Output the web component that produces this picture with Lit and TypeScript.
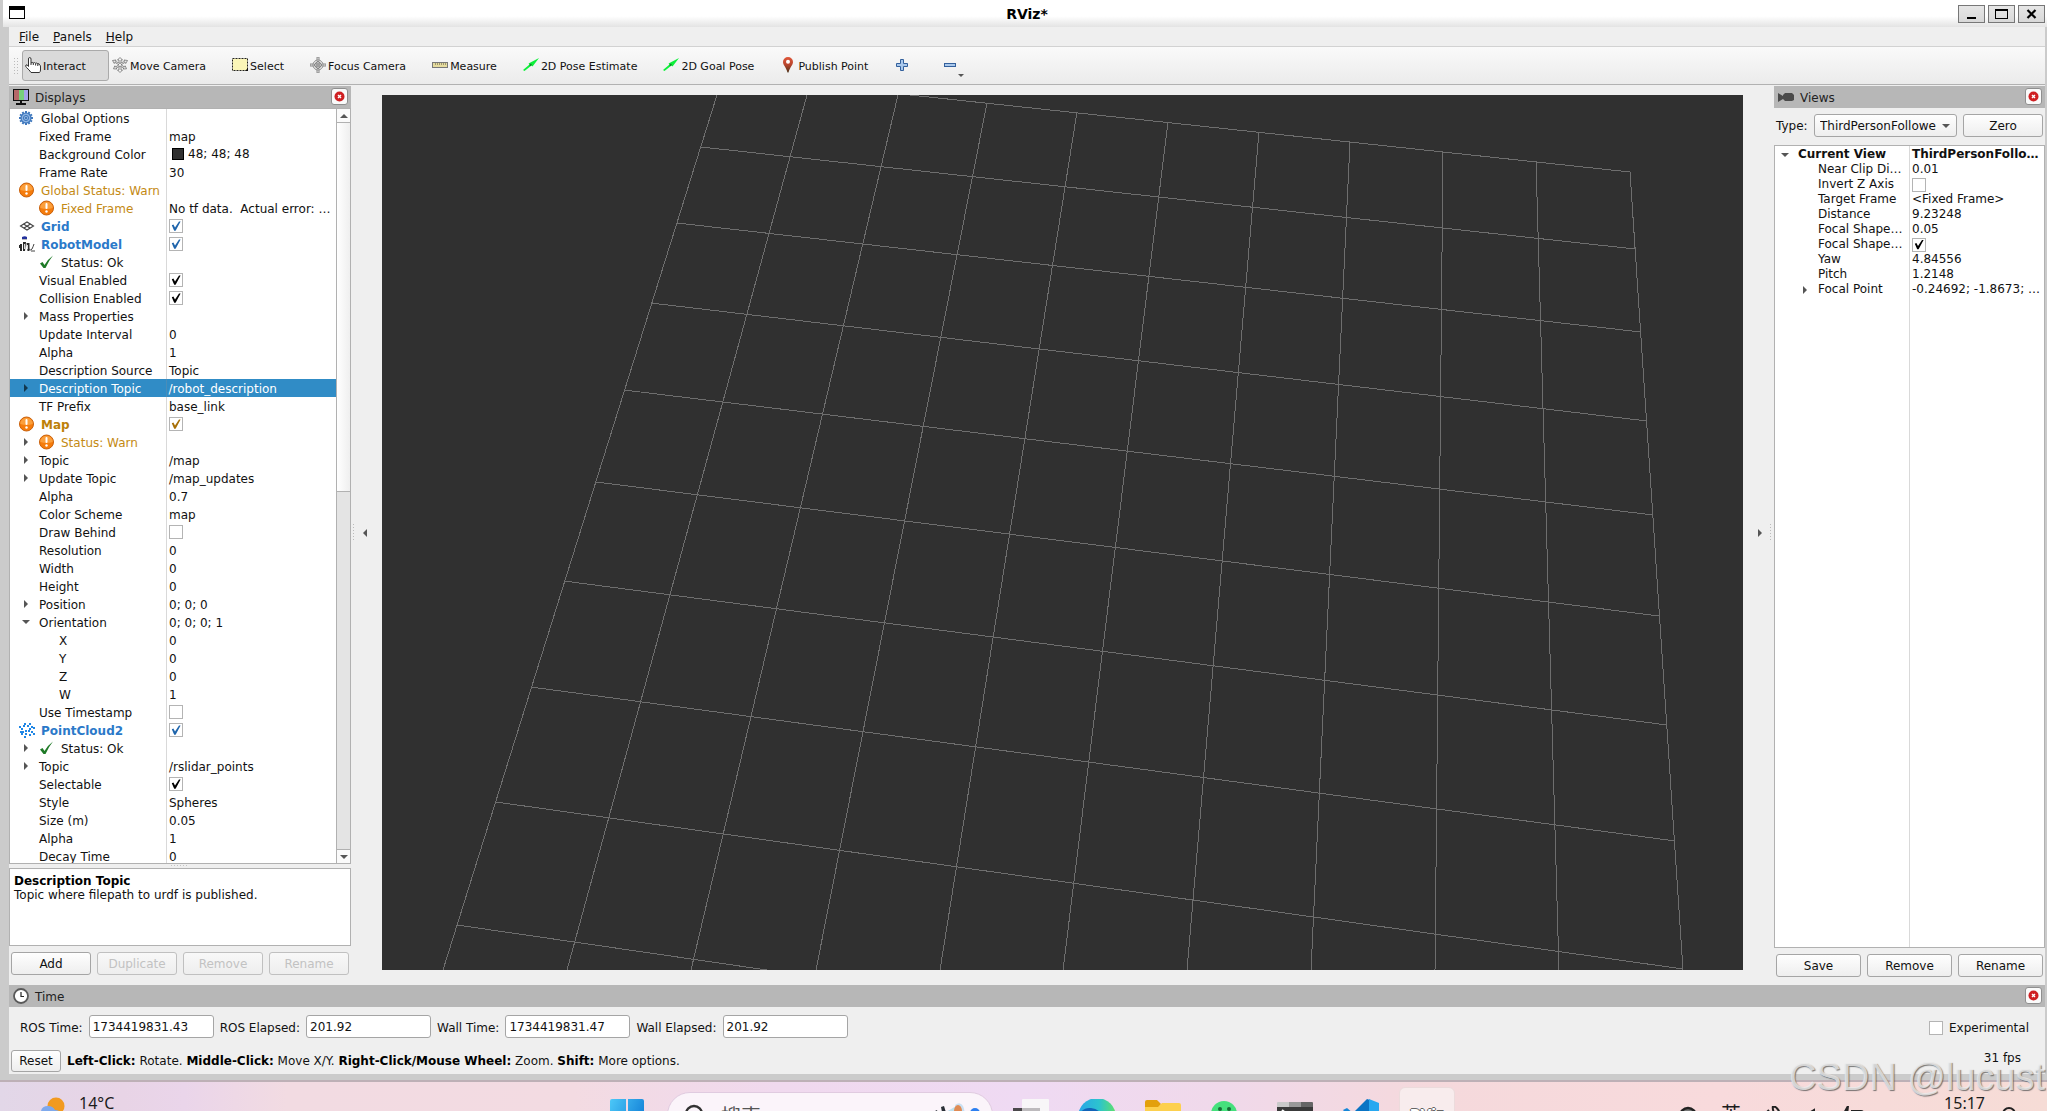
import { LitElement, html, svg, css, nothing, TemplateResult } from "lit";
import { customElement, property } from "lit/decorators.js";
import { classMap } from "lit/directives/class-map.js";

interface Row {
  name: string;
  level: 0 | 1 | 2;
  value?: string;
  check?: boolean;
  tone?: "warn" | "blue";
  bold?: boolean;
  boldValue?: boolean;
  icon?: string;
  arrow?: "closed" | "open";
  swatch?: boolean;
  selected?: boolean;
}

const gear = () => {
  const teeth = Array.from({ length: 12 }, (_, i) => i * 30);
  return svg`
    ${teeth.map((a) => svg`<rect x="6" y="1" width="2" height="3" fill="#3f78bd" transform="rotate(${a} 7 8)"/>`)}
    <circle cx="7" cy="8" r="5" fill="#8db4e2" stroke="#3f78bd" stroke-width="1.2"/>
    <circle cx="7" cy="8" r="2.6" fill="none" stroke="#3f78bd"/>
    <circle cx="7" cy="8" r="1" fill="#2f68ad"/>`;
};

const cloud: number[][] = [
  [5, 1], [10, 1], [0, 4], [4, 3], [8, 3], [12, 4], [2, 6], [6, 8], [9, 8], [10, 6],
  [3, 9], [1, 9], [14, 5], [12, 9], [6, 11], [10, 12], [14, 11], [5, 14], [2, 11],
];

const icons: Record<string, () => TemplateResult | unknown> = {
  gear,
  warn: () => svg`
    <circle cx="7.500" cy="8" r="7" fill="#f57c0c" stroke="#c9600a"/>
    <path d="M1.300 8a6.200 6.200 0 0 1 12.400 0q-6 2-12.400 0z" fill="#fb9f3c"/>
    <rect x="6.500" y="3" width="2" height="6" rx="1" fill="#fff"/>
    <circle cx="7.500" cy="11.500" r="1.200" fill="#fff"/>`,
  ok: () => svg`<path d="M1 9.500l2.500-1.500 2 3Q9 5 14 1.500 9.500 7 6.500 14H4.500z" fill="#1e7a26"/>`,
  grid: () => svg`
    <g fill="none" stroke="#444" stroke-width="1.100">
      <path d="M1.500 8L8 4l6.500 4L8 12z"/>
      <path d="M4.500 6l6.500 4M11.500 6L5 10"/>
    </g>`,
  robot: () => svg`
    <path d="M3 1q3-1.500 5 0v2H3z" fill="#23319c"/>
    <path d="M3 3h5v1H3z" fill="#b9b9b9"/>
    <path d="M1 8h2v7H1zM4 6h3l-1 9H4zM7.500 7h3v8h-2zM0 9h1v3H0z" fill="#2a2a2a"/>
    <path d="M5 8h1v5H5zM8 9h1v4H8z" fill="#d8d8d8"/>
    <path d="M10 13q2 2 3 0t2-5M12 15h4" fill="none" stroke="#444"/>`,
  points: () => svg`<g fill="#1f86e5">${cloud.map(
    ([x, y]) => svg`<rect x="${x}" y="${y}" width="2" height="2"/>`,
  )}</g>`,
  displays: () => svg`
    <rect x="0" y="0" width="16" height="12" fill="#111"/>
    <rect x="1" y="1" width="5" height="10" fill="#b56868"/>
    <rect x="6" y="1" width="5" height="10" fill="#77cf7c"/>
    <rect x="11" y="1" width="4" height="10" fill="#a5a2ea"/>
    <path d="M7 12h2v2h4v2H3v-2h4z" fill="#111"/>`,
  views: () => svg`
    <path d="M0 4l5 3V6l2-2h7l2 2v5l-2 1H7L5 10l-5 3z" fill="#4a4a4a"/>`,
  clock: () => svg`
    <circle cx="8" cy="8" r="7" fill="#fff" stroke="#595959" stroke-width="1.800"/>
    <path d="M8 4v4.500h3" fill="none" stroke="#222" stroke-width="1.200"/>`,
  window: () => svg`
    <rect x="0.500" y="1.500" width="15" height="12" fill="#fff" stroke="#000"/>
    <rect x="0" y="1" width="16" height="4" fill="#000"/>`,
  hand: () => svg`
    <path d="M3.500 9.500V2q0-1.500 1.200-1.500T6 2v4q1.300-1.200 2.300 0 1.300-1 2.300.3 1.300-.8 2.200.4 1.700-.4 1.700 1.300 1.300 0 1 2V13q0 1.500-1 2.500H6Q4.500 13 1.500 10.500 0 9 1 8t2.500 1.500zM6 6v2M8.300 6v2M10.600 6.500v2M12.800 7v2" fill="#fff" stroke="#333"/>`,
  move: () => svg`
    <g fill="#f5f5f5" stroke="#6f6f6f" stroke-width="0.800">
      <path d="M8 0.500l2.500 2.500H9v10h1.500L8 15.500 5.500 13H7V3H5.500z"/>
      <path d="M0.500 3.500L4 3l-.6 1.300L8 6.500l4.600-2.200L12 3l3.500.5-1.800 3-.5-1.200L9 7.800l3.500 2.200.6-1.200 1.400 3-3.300.2.600-1L8 9l-3.800 2 .6 1-3.300-.2 1.400-3 .6 1.200L7 7.800 2.800 5.300l-.5 1.200z"/>
    </g>`,
  select: () => svg`
    <rect x="0.500" y="1.500" width="15" height="12" fill="#fbf6b8" stroke="#222" stroke-dasharray="2 1"/>
    <path d="M13 14l3-3v3z" fill="#111"/>`,
  focus: () => svg`
    <g fill="#ececec" stroke="#808080" stroke-width="0.900">
      <path d="M7 0h2v4H7zM7 12h2v4H7zM0 7h4v2H0zM12 7h4v2h-4z"/>
      <circle cx="8" cy="8" r="5"/><circle cx="8" cy="8" r="3"/>
      <path d="M7 4.500h2v7H7zM4.500 7h7v2h-7z"/>
    </g>`,
  measure: () => svg`
    <rect x="0.500" y="5.500" width="15" height="5" fill="#e6dc9e" stroke="#777"/>
    <path d="M3.500 6v2M5.500 6v2M7.500 6v2M9.500 6v2M11.500 6v2M13.500 6v2" stroke="#8a8462" stroke-width="0.800"/>`,
  pose: () => svg`
    <path d="M0 13L6.500 7.500 5.500 6.500 16 1 9.500 9.500l-1-1L1.500 14z" fill="#0df03a"/>
    <path d="M6 8l2-1.500L9 8 7.500 9z" fill="#0a8a22"/>`,
  pin: () => svg`
    <defs><linearGradient id="p" x1="0" y1="0" x2="0" y2="1"><stop offset="0" stop-color="#e0573a"/><stop offset="0.500" stop-color="#b8452d"/><stop offset="1" stop-color="#4b3218"/></linearGradient></defs>
    <path d="M8 0a5 5 0 0 1 5 5c0 3-3 5-4.500 10.500h-1C6 10 3 8 3 5a5 5 0 0 1 5-5z" fill="url(#p)"/>
    <circle cx="8" cy="4.700" r="2" fill="#fff"/>`,
  plus: () => svg`<path d="M6.500 2.500h3v4h4v3h-4v4h-3v-4h-4v-3h4z" fill="#a9c8ec" stroke="#33609c"/>`,
  minus: () => svg`<rect x="2.500" y="6.500" width="11" height="3" fill="#a9c8ec" stroke="#33609c"/>`,
};

const icon = (name: string, size = 16) =>
  html`<svg class="icon" width=${size} height=${size} viewBox="0 0 16 16" aria-hidden="true">${icons[name]()}</svg>`;

const base = css`
  * { box-sizing: border-box; }
  button, input, select { font: inherit; color: inherit; margin: 0; }
  .icon { display: block; flex: none; }
  .btn {
    height: 23px; padding: 0; border: 1px solid #a5a5a5; border-radius: 3px;
    background: linear-gradient(#fefefe, #eeeeee); line-height: 20px; text-align: center;
  }
  .btn:disabled { color: #c2c2c2; border-color: #c0c0c0; background: linear-gradient(#f8f8f8, #eeeeee); }
  .check {
    appearance: none; display: grid; place-items: center; flex: none; width: 14px; height: 14px;
    background: #fff; border: 1px solid #b4b4b4; color: #000;
  }
  .check:checked::after {
    content: ""; width: 10px; height: 10px; background: currentColor;
    clip-path: polygon(8% 42%, 24% 36%, 40% 66%, 80% 4%, 96% 4%, 46% 98%, 32% 98%);
  }
`;

const displayRows: Row[] = [
  { name: "Global Options", level: 0, icon: "gear" },
  { name: "Fixed Frame", level: 1, value: "map" },
  { name: "Background Color", level: 1, value: "48; 48; 48", swatch: true },
  { name: "Frame Rate", level: 1, value: "30" },
  { name: "Global Status: Warn", level: 0, icon: "warn", tone: "warn" },
  { name: "Fixed Frame", level: 1, icon: "warn", tone: "warn", value: "No tf data.\u00a0 Actual error: …" },
  { name: "Grid", level: 0, icon: "grid", tone: "blue", bold: true, check: true },
  { name: "RobotModel", level: 0, icon: "robot", tone: "blue", bold: true, check: true },
  { name: "Status: Ok", level: 1, icon: "ok" },
  { name: "Visual Enabled", level: 1, check: true },
  { name: "Collision Enabled", level: 1, check: true },
  { name: "Mass Properties", level: 1, arrow: "closed" },
  { name: "Update Interval", level: 1, value: "0" },
  { name: "Alpha", level: 1, value: "1" },
  { name: "Description Source", level: 1, value: "Topic" },
  { name: "Description Topic", level: 1, value: "/robot_description", arrow: "closed", selected: true },
  { name: "TF Prefix", level: 1, value: "base_link" },
  { name: "Map", level: 0, icon: "warn", tone: "warn", bold: true, check: true },
  { name: "Status: Warn", level: 1, icon: "warn", tone: "warn", arrow: "closed" },
  { name: "Topic", level: 1, value: "/map", arrow: "closed" },
  { name: "Update Topic", level: 1, value: "/map_updates", arrow: "closed" },
  { name: "Alpha", level: 1, value: "0.7" },
  { name: "Color Scheme", level: 1, value: "map" },
  { name: "Draw Behind", level: 1, check: false },
  { name: "Resolution", level: 1, value: "0" },
  { name: "Width", level: 1, value: "0" },
  { name: "Height", level: 1, value: "0" },
  { name: "Position", level: 1, value: "0; 0; 0", arrow: "closed" },
  { name: "Orientation", level: 1, value: "0; 0; 0; 1", arrow: "open" },
  { name: "X", level: 2, value: "0" },
  { name: "Y", level: 2, value: "0" },
  { name: "Z", level: 2, value: "0" },
  { name: "W", level: 2, value: "1" },
  { name: "Use Timestamp", level: 1, check: false },
  { name: "PointCloud2", level: 0, icon: "points", tone: "blue", bold: true, check: true },
  { name: "Status: Ok", level: 1, icon: "ok", arrow: "closed" },
  { name: "Topic", level: 1, value: "/rslidar_points", arrow: "closed" },
  { name: "Selectable", level: 1, check: true },
  { name: "Style", level: 1, value: "Spheres" },
  { name: "Size (m)", level: 1, value: "0.05" },
  { name: "Alpha", level: 1, value: "1" },
  { name: "Decay Time", level: 1, value: "0" },
];

const viewRows: Row[] = [
  { name: "Current View", level: 1, value: "ThirdPersonFollo…", bold: true, boldValue: true, arrow: "open" },
  { name: "Near Clip Di…", level: 2, value: "0.01" },
  { name: "Invert Z Axis", level: 2, check: false },
  { name: "Target Frame", level: 2, value: "<Fixed Frame>" },
  { name: "Distance", level: 2, value: "9.23248" },
  { name: "Focal Shape…", level: 2, value: "0.05" },
  { name: "Focal Shape…", level: 2, check: true },
  { name: "Yaw", level: 2, value: "4.84556" },
  { name: "Pitch", level: 2, value: "1.2148" },
  { name: "Focal Point", level: 2, value: "-0.24692; -1.8673; …", arrow: "closed" },
];

@customElement("property-tree")
class PropertyTree extends LitElement {
  @property({ attribute: false }) rows: Row[] = [];
  @property() label = "";
  @property({ type: Boolean, reflect: true }) compact = false;

  static styles = [base, css`
    :host {
      display: block; flex: 1; min-width: 0; height: 100%; overflow: hidden;
      background: linear-gradient(#d9d9d9, #d9d9d9) 156px 0 / 1px 100% no-repeat #fff;
    }
    :host([compact]) { background-position: 134px 0; padding-top: 1px; }
    table { width: 100%; border-collapse: collapse; table-layout: fixed; }
    .names { width: 156px; }
    :host([compact]) .names { width: 134px; }
    td { padding: 0; height: 18px; overflow: hidden; }
    :host([compact]) td { height: 15px; }
    .cell { display: flex; align-items: center; height: 18px; line-height: 16px; white-space: pre; }
    .text { padding-top: 2px; }
    :host([compact]) .cell { height: 15px; line-height: 15px; }
    :host([compact]) .text, .swatch + .text { padding-top: 0; }
    .lv0, .lv1 { padding-left: 9px; }
    .lv2 { padding-left: 29px; }
    :host([compact]) .lv1 { padding-left: 3px; }
    :host([compact]) .lv2 { padding-left: 23px; }
    .slot { width: 14px; height: 12px; margin-right: 6px; flex: none; fill: #555; }
    .icon { margin-right: 6px; }
    .value { padding-left: 3px; }
    .bold { font-weight: bold; }
    .warn { color: #c48a14; }
    .blue { color: #2b79c9; }
    .bold.warn { color: #bd8008; }
    .check.warn { color: #a86f06; }
    .check.blue { color: #1f65ac; }
    .selected td { background: #308cc6; color: #fff; }
    .selected .slot { fill: #12384f; }
    .selected td + td { border-left: 1px solid #4a8db8; }
    .selected td + td .value { padding-left: 2px; }
    .swatch { width: 12px; height: 12px; margin: 0 4px 0 3px; background: #303030; border: 1px solid #000; }
  `];

  private arrow(row: Row) {
    if (row.level === 0) return nothing;
    const d = row.arrow === "open" ? "M3 4h8L7 8z" : row.arrow === "closed" ? "M5 2l4 4-4 4z" : "";
    return html`<svg class="slot" viewBox="0 0 14 12" aria-hidden="true"><path d=${d} /></svg>`;
  }

  render() {
    return html`
      <table aria-label=${this.label}>
        <colgroup><col class="names" /><col /></colgroup>
        <tbody>
          ${this.rows.map((row) => html`
            <tr class=${classMap({ selected: !!row.selected })}>
              <td>
                <div class=${classMap({ cell: true, [`lv${row.level}`]: true, bold: !!row.bold, [row.tone ?? "plain"]: true })}>
                  ${this.arrow(row)}${row.icon ? icon(row.icon) : nothing}<span class="text">${row.name}</span>
                </div>
              </td>
              <td>
                <div class=${classMap({ cell: true, value: true, bold: !!row.boldValue })}>
                  ${row.check !== undefined
                    ? html`<input type="checkbox" class="check ${row.tone ?? ""}" aria-label=${row.name} .checked=${row.check} />`
                    : nothing}${row.swatch ? html`<span class="swatch"></span>` : nothing}<span class="text">${row.value ?? ""}</span>
                </div>
              </td>
            </tr>`)}
        </tbody>
      </table>`;
  }
}

@customElement("dock-title")
class DockTitle extends LitElement {
  @property() icon = "";
  @property() label = "";

  static styles = [base, css`
    :host {
      display: flex; flex: none; align-items: center; gap: 6px; height: 22px; padding: 0 3px 0 4px;
      background: #b7b7b7; color: #222;
    }
    .text { flex: 1; font: inherit; line-height: 20px; margin: 0; padding-top: 2px; }
    .close {
      display: grid; place-items: center; width: 17px; height: 17px; padding: 0; margin-bottom: 2px;
      border: 1px solid #8f8f8f; border-radius: 3px; background: #fafafa;
    }
  `];

  render() {
    return html`
      ${icon(this.icon)}
      <h2 class="text">${this.label}</h2>
      <button class="close" aria-label="Close ${this.label}">
        <svg class="icon" width="11" height="11" viewBox="0 0 11 11" aria-hidden="true">
          <circle cx="5.500" cy="5.500" r="5" fill="#cf1f22" />
          <path d="M4 4l3 3M7 4L4 7" stroke="#fff" stroke-width="1.400" />
        </svg>
      </button>`;
  }
}

const gridLines: number[][] = [
  [882, 92, 1630, 172], [701, 147, 1635, 249], [677, 223, 1641, 332], [651, 303, 1647, 421],
  [624, 390, 1653, 515], [596, 482, 1659, 616], [564, 581, 1667, 725], [531, 687, 1675, 841],
  [496, 802, 1683, 969], [457, 925, 767, 970],
  [717, 95, 443, 970], [807, 95, 567, 970], [898, 95, 691, 970], [987, 103, 816, 970],
  [1077, 112, 940, 970], [1168, 122, 1063, 970], [1259, 132, 1187, 970], [1350, 142, 1311, 970],
  [1443, 152, 1435, 970], [1536, 161, 1559, 970], [1630, 172, 1683, 970],
];

@customElement("scene-view")
class SceneView extends LitElement {
  static styles = css`
    :host { display: block; flex: 1; min-width: 0; margin: 9px 0 15px; background: #303030; overflow: hidden; }
    svg { display: block; width: 100%; height: 100%; }
    line { stroke: #6e6e6e; stroke-width: 1; shape-rendering: crispEdges; }
  `;

  render() {
    return html`
      <svg viewBox="382 95 1361 875" preserveAspectRatio="xMidYMid slice" role="img" aria-label="Grid">
        ${gridLines.map(([a, b, c, d]) => svg`<line x1=${a} y1=${b} x2=${c} y2=${d} />`)}
      </svg>`;
  }
}

@customElement("task-bar")
class TaskBar extends LitElement {
  static styles = [base, css`
    :host {
      display: grid; grid-template-columns: minmax(0, 1fr) auto minmax(0, 1fr); align-items: start;
      flex: none; height: 29px; overflow: hidden; padding-left: 7px;
      color: #1c1c1c; font: 16px "Noto Sans", "Noto Sans CJK SC", sans-serif;
      background: linear-gradient(90deg, #e2d7e8 0, #e8d4e6 6%, #ead5ea 9%, #f2dbe2 14%, #f3dbe2 28%, #f0d9ee 38%, #efdaf3 50%, #f0d9ea 60%, #f5d9dc 70%, #f8dadc 84%, #f6dcd6 100%);
    }
    .side { display: flex; align-items: flex-start; }
    .weather { gap: 14px; padding-left: 34px; }
    .weather svg { margin-top: 15px; }
    .weather span, .clock { line-height: 22px; margin-top: 10px; }
    .tray { justify-content: flex-end; gap: 16px; padding-right: 30px; }
    .tray svg { margin-top: 24px; flex: none; }
    .icons { display: flex; gap: 23px; align-items: flex-start; margin-right: 62px; }
    .ime { font-size: 20px; line-height: 24px; margin-top: 21px; }
    .apps { display: flex; align-items: flex-start; }
    .app {
      display: flex; flex: none; justify-content: center; width: 66px; height: 48px; padding: 17px 0 0;
      border: 0; background: none;
    }
    .tile {
      display: block; width: 56px; height: 48px; margin-top: -12px; border: 1px solid #ecdbdc; border-radius: 6px;
      background: #f8eced; color: #fff; font: bold 14px/20px "DejaVu Sans", sans-serif; padding-top: 16px;
      text-shadow: 1px 0 #666, -1px 0 #666, 0 1px #666, 0 -1px #666;
    }
    .search {
      display: flex; flex: none; gap: 18px; width: 326px; height: 46px; margin: 10px 5px 0 7px; padding: 10px 12px 0 17px;
      border: 1px solid #e0cbe0; border-radius: 23px; background: #fbf4fa; align-items: flex-start;
    }
    .search input {
      flex: 1; min-width: 0; height: 28px; padding: 0; border: 0; background: none; outline: none;
      font-size: 20px; line-height: 28px;
    }
    .search input::placeholder { color: #555; opacity: 1; }
  `];

  render() {
    return html`
      <div class="side weather">
        <svg width="24" height="22" viewBox="0 0 24 22" aria-hidden="true">
          <circle cx="15" cy="9" r="8.500" fill="#f29a1f" />
          <path d="M0 14q1-5 7-5 5 0 7 4 6 0 7 6v3H0z" fill="#7fa9ec" />
        </svg>
        <span>14°C</span>
      </div>
      <div class="apps">
        <button class="app" aria-label="Start">
          <svg width="34" height="34" viewBox="0 0 34 34" aria-hidden="true">
            <defs><linearGradient id="w" x1="0" x2="1" y2="0.500"><stop offset="0" stop-color="#4cc8f8" /><stop offset="1" stop-color="#1482d8" /></linearGradient></defs>
            <path d="M0 2q0-2 2-2h14v16H0zM18 0h14q2 0 2 2v14H18zM0 18h16v16H0zM18 18h16v16H18z" fill="url(#w)" />
          </svg>
        </button>
        <div class="search">
          <svg width="18" height="22" viewBox="0 0 18 22" aria-hidden="true"><circle cx="9" cy="11" r="8" fill="none" stroke="#333" stroke-width="2.400" /></svg>
          <input type="text" placeholder="搜索" aria-label="搜索" />
          <svg width="52" height="24" viewBox="0 0 52 24" aria-hidden="true">
            <path d="M5 9l4-2 3 12H8zM13 4l3-1 5 16h-5z" fill="#2a2f36" />
            <path d="M18 9l12-7 3 15H18z" fill="#bfe0ee" />
            <path d="M27 2q5-4 8 1 3 6 0 14h-6z" fill="#c9dff2" />
            <ellipse cx="30" cy="8" rx="4" ry="6" fill="#e08a54" />
            <circle cx="47" cy="10" r="5" fill="#2d7ff0" />
          </svg>
        </div>
        <button class="app" aria-label="Task view">
          <svg width="36" height="30" viewBox="0 0 36 30" aria-hidden="true">
            <rect x="9" y="0" width="27" height="24" rx="1" fill="#f8f6f8" />
            <rect x="0" y="9" width="27" height="20" fill="#4a484a" /><rect x="9" y="9" width="18" height="15" fill="#bdbabd" />
          </svg>
        </button>
        <button class="app" aria-label="Edge">
          <svg width="38" height="36" viewBox="0 0 38 36" aria-hidden="true">
            <defs><linearGradient id="e" x1="0" x2="1"><stop offset="0" stop-color="#2aa5e8" /><stop offset="0.550" stop-color="#2cc3cf" /><stop offset="1" stop-color="#5fe06a" /></linearGradient></defs>
            <circle cx="19" cy="18" r="19" fill="url(#e)" />
            <path d="M0 18q4-10 13-9t12 9z" fill="#1263b8" />
          </svg>
        </button>
        <button class="app" aria-label="Explorer">
          <svg width="36" height="30" viewBox="0 0 36 30" aria-hidden="true">
            <path d="M0 3q0-2 2-2h10l4 4-3 4H0z" fill="#e3a00c" />
            <path d="M0 8h13l4-4h17q2 0 2 2v24H0z" fill="#fdd04e" />
          </svg>
        </button>
        <button class="app" aria-label="Chat">
          <svg width="36" height="30" viewBox="0 0 36 30" aria-hidden="true">
            <circle cx="13" cy="15" r="13" fill="#45e07c" />
            <circle cx="9" cy="10" r="2" fill="#176b36" /><circle cx="18" cy="10" r="2" fill="#176b36" />
          </svg>
        </button>
        <button class="app" aria-label="Terminal">
          <svg width="36" height="30" viewBox="0 0 36 30" aria-hidden="true">
            <path d="M0 4q0-1 1-1h11v5H0z" fill="#c9c9c9" /><path d="M12 3h12v5H12z" fill="#999" />
            <path d="M24 3h11q1 0 1 1v4H24z" fill="#666" /><path d="M0 8h36v22H0z" fill="#3a3a3a" />
            <path d="M5 11l5 4" stroke="#fff" stroke-width="2" />
          </svg>
        </button>
        <button class="app" aria-label="Code">
          <svg width="36" height="34" viewBox="0 0 36 34" aria-hidden="true">
            <path d="M24 0l3 1v12L6 30 0 24z" fill="#0a74c4" />
            <path d="M26 0l10 4v30l-10-4z" fill="#28a8f0" />
            <path d="M0 11l4-2 14 12-6 4z" fill="#1587d8" />
          </svg>
        </button>
        <button class="app"><span class="tile">RViz</span></button>
      </div>
      <div class="side tray">
        <div class="icons">
          <svg width="20" height="12" viewBox="0 0 20 12" aria-hidden="true"><circle cx="10" cy="10" r="8" fill="#777" stroke="#222" stroke-width="2.400" /></svg>
          <span class="ime">英</span>
          <svg width="18" height="12" viewBox="0 0 18 12" aria-hidden="true"><path d="M1 8l4-4M9 0q5 1 7 8M9 0q-1 3 2 9" fill="none" stroke="#222" stroke-width="2" /></svg>
          <svg width="14" height="12" viewBox="0 0 14 12" aria-hidden="true"><path d="M1 9l8-5v8" fill="none" stroke="#222" stroke-width="2" /></svg>
          <svg width="24" height="12" viewBox="0 0 24 12" aria-hidden="true"><path d="M6 0L1 9h4zM9 5h10q3 0 3 5" fill="none" stroke="#222" stroke-width="2" /></svg>
        </div>
        <span class="clock">15:17</span>
        <svg width="16" height="12" viewBox="0 0 16 12" aria-hidden="true"><circle cx="8" cy="8" r="6" fill="none" stroke="#222" stroke-width="2" /></svg>
      </div>`;
  }
}

@customElement("app-root")
class AppRoot extends LitElement {
  static styles = [base, css`
    :host {
      display: flex; flex-direction: column; height: 100vh; overflow: hidden; position: relative;
      background: #cbcbcb; color: #111; font: 12px "DejaVu Sans", sans-serif;
    }
    .titlebar {
      display: grid; grid-template-columns: 1fr auto 1fr; flex: none; align-items: start; height: 27px;
      margin-left: 3px; padding: 5px 2px 0 6px; background: linear-gradient(#fff 60%, #e3e3e3);
    }
    .title { margin: 0; font-size: 14px; line-height: 18px; color: #000; }
    .wbtns { display: flex; gap: 3px; justify-content: flex-end; }
    .wbtn {
      display: grid; place-items: center; width: 27px; height: 18px; padding: 0; border: 1px solid #777;
      background: linear-gradient(#e6e6e6, #d8d8d8);
    }
    .frame { display: flex; flex: 1; flex-direction: column; min-height: 0; margin: 0 2px 6px 9px; background: #efefef; }
    .menu { display: flex; flex: none; height: 20px; gap: 14px; padding: 1px 0 0 10px; border-bottom: 1px solid #d2d2d2; }
    .menu button { padding: 0; border: 0; background: none; line-height: 18px; }
    .tools {
      display: flex; flex: none; align-items: center; height: 38px; padding-left: 4px; font-size: 11px;
      border-bottom: 1px solid #b1b1b1; background: linear-gradient(#fafafa, #ebebeb);
    }
    .grip { width: 5px; height: 17px; margin-right: 4px; background: radial-gradient(circle, #bbb 1px, transparent 1px) 0 0 / 3px 3px; }
    .tool {
      display: flex; align-items: center; gap: 2px; height: 31px; padding: 0 22px 0 2px;
      border: 1px solid transparent; border-radius: 3px; background: none;
    }
    .tool .icon { margin-bottom: 2px; }
    .tool .text { padding-top: 2px; }
    .tool.active { border-color: #aaa; background: #dadada; }
    .tool.drop { gap: 0; }
    .caret { display: block; align-self: flex-end; margin-bottom: 3px; }
    .caret svg { display: block; }
    .main { display: flex; flex: 1; min-height: 0; padding-top: 1px; }
    .dock { display: flex; flex: none; flex-direction: column; }
    .left { width: 342px; }
    .right { width: 271px; }
    .box { display: flex; flex: 1; min-height: 0; border: 1px solid #b1b1b1; background: #fff; }
    .scroll { display: flex; flex: none; flex-direction: column; width: 14px; border-left: 1px solid #b1b1b1; background: #e4e4e4; }
    .scroll button { display: grid; place-items: center; flex: none; height: 14px; padding: 0; border: 0; background: #fafafa; }
    .scroll .up { border-bottom: 1px solid #b1b1b1; }
    .scroll .down { border-top: 1px solid #b1b1b1; margin-top: auto; }
    .thumb { height: 49%; border-bottom: 1px solid #b1b1b1; background: linear-gradient(90deg, #fff, #efefef); }
    .hsplit { display: grid; place-items: center; flex: none; height: 4px; }
    .hdots { width: 18px; height: 2px; background: linear-gradient(90deg, #c4c4c4 1px, transparent 1px) 0 0 / 3px 1px repeat-x; }
    .help { flex: none; height: 78px; padding: 5px 4px; border: 1px solid #b1b1b1; background: #fff; line-height: 14px; }
    .help strong, .hints b { color: #000; }
    .help p { margin: 0; }
    .row { display: flex; flex: none; gap: 6px; padding: 6px 2px 10px; }
    .row.tight { padding-bottom: 8px; }
    .row .btn { flex: 1; }
    .vsplit { display: flex; flex: none; align-items: center; width: 31px; padding-bottom: 6px; gap: 6px; }
    .vsplit.end { justify-content: flex-end; }
    .vsplit button { padding: 0; border: 0; background: none; }
    .vdots { width: 2px; height: 18px; margin: 0 2px; background: linear-gradient(#bbb 1px, transparent 1px) 0 0 / 1px 3px repeat-y; }
    .typerow { display: flex; flex: none; align-items: center; gap: 6px; padding: 6px 2px 8px; }
    .typerow label { flex: none; width: 32px; }
    .combo { display: flex; flex: 1; min-width: 0; align-items: center; position: relative; }
    .combo select {
      appearance: none; width: 100%; height: 23px; padding: 0 20px 0 5px; border: 1px solid #a5a5a5; border-radius: 3px;
      background: linear-gradient(#fefefe, #eeeeee); overflow: hidden;
    }
    .combo svg { position: absolute; right: 7px; pointer-events: none; }
    .zero { width: 80px; }
    .times { display: flex; flex: none; align-items: center; gap: 6px; padding: 8px 16px 12px 11px; }
    .times label { padding-top: 2px; }
    .times input[type="text"] { width: 125px; height: 23px; padding: 0 3px; border: 1px solid #a5a5a5; border-radius: 3px; background: #fff; }
    .spacer { flex: 1; }
    .exp { display: flex; align-items: center; gap: 6px; }
    .status { display: flex; flex: none; align-items: center; gap: 6px; padding: 0 24px 2px 2px; }
    .reset { width: 50px; height: 22px; }
    .hints { flex: 1; }
    .fps { padding-bottom: 7px; }
    .edge { flex: none; height: 2px; background: #bdb0b6; }
    .mark {
      position: absolute; right: 2px; bottom: 12px; margin: 0; font: 38px/44px "Liberation Sans", sans-serif;
      color: rgba(238, 238, 238, 0.8); text-shadow: 1px 1px 1px rgba(90, 90, 90, 0.8); pointer-events: none;
    }
  `];

  private tools: [string, string][] = [
    ["hand", "Interact"], ["move", "Move Camera"], ["select", "Select"], ["focus", "Focus Camera"],
    ["measure", "Measure"], ["pose", "2D Pose Estimate"], ["pose", "2D Goal Pose"], ["pin", "Publish Point"],
  ];

  private clocks: [string, string, string][] = [
    ["rt", "ROS Time:", "1734419831.43"], ["re", "ROS Elapsed:", "201.92"],
    ["wt", "Wall Time:", "1734419831.47"], ["we", "Wall Elapsed:", "201.92"],
  ];

  private tri(d: string, w = 8, h = 8) {
    return html`<svg width=${w} height=${h} viewBox="0 0 ${w} ${h}" aria-hidden="true"><path d=${d} fill="#555" /></svg>`;
  }

  render() {
    return html`
      <header class="titlebar">
        ${icon("window")}
        <h1 class="title">RViz*</h1>
        <div class="wbtns">
          <button class="wbtn" aria-label="Minimize"><svg width="13" height="12" viewBox="0 0 13 12"><path d="M2 9h9v2H2z" /></svg></button>
          <button class="wbtn" aria-label="Maximize"><svg width="13" height="12" viewBox="0 0 13 12"><path d="M0 1h13v10H0zM1 3v7h11V3z" fill-rule="evenodd" /></svg></button>
          <button class="wbtn" aria-label="Close"><svg width="13" height="12" viewBox="0 0 13 12"><path d="M2.500 2l8 8M10.500 2l-8 8" stroke="#000" stroke-width="2.200" /></svg></button>
        </div>
      </header>
      <div class="frame">
        <nav class="menu">
          <button><u>F</u>ile</button><button><u>P</u>anels</button><button><u>H</u>elp</button>
        </nav>
        <div class="tools">
          <span class="grip"></span>
          ${this.tools.map(([name, text], i) => html`
            <button class="tool ${i === 0 ? "active" : ""}">${icon(name)}<span class="text">${text}</span></button>`)}
          <button class="tool" aria-label="Add tool">${icon("plus")}<span>&nbsp;</span></button>
          <button class="tool drop" aria-label="Remove tool">${icon("minus")}<span class="caret">${this.tri("M0 0h6L3 3z", 6, 3)}</span></button>
        </div>
        <main class="main">
          <section class="dock left">
            <dock-title icon="displays" label="Displays"></dock-title>
            <div class="box">
              <property-tree label="Displays" .rows=${displayRows}></property-tree>
              <div class="scroll">
                <button class="up" aria-label="Scroll up">${this.tri("M0 6h8L4 2z")}</button>
                <div class="thumb"></div>
                <button class="down" aria-label="Scroll down">${this.tri("M0 2h8L4 6z")}</button>
              </div>
            </div>
            <div class="hsplit"><span class="hdots"></span></div>
            <div class="help"><p><strong>Description Topic</strong></p><p>Topic where filepath to urdf is published.</p></div>
            <div class="row">
              <button class="btn">Add</button>
              <button class="btn" disabled>Duplicate</button>
              <button class="btn" disabled>Remove</button>
              <button class="btn" disabled>Rename</button>
            </div>
          </section>
          <div class="vsplit"><span class="vdots"></span><button aria-label="Hide left panel">${this.tri("M4 0v8L0 4z", 4)}</button></div>
          <scene-view></scene-view>
          <div class="vsplit end"><button aria-label="Hide right panel">${this.tri("M0 0l4 4-4 4z", 4)}</button><span class="vdots"></span></div>
          <section class="dock right">
            <dock-title icon="views" label="Views"></dock-title>
            <div class="typerow">
              <label for="type">Type:</label>
              <span class="combo">
                <select id="type"><option>ThirdPersonFollowe</option></select>
                ${this.tri("M0 2h8L4 6z")}
              </span>
              <button class="btn zero">Zero</button>
            </div>
            <div class="box"><property-tree compact label="Views" .rows=${viewRows}></property-tree></div>
            <div class="row tight">
              <button class="btn">Save</button><button class="btn">Remove</button><button class="btn">Rename</button>
            </div>
          </section>
        </main>
        <section>
          <dock-title icon="clock" label="Time"></dock-title>
          <div class="times">
            ${this.clocks.map(([id, text, value]) => html`
              <label for=${id}>${text}</label><input type="text" id=${id} .value=${value} />`)}
            <span class="spacer"></span>
            <label class="exp"><input type="checkbox" class="check" />Experimental</label>
          </div>
          <div class="status">
            <button class="btn reset">Reset</button>
            <span class="hints"><b>Left-Click:</b> Rotate. <b>Middle-Click:</b> Move X/Y. <b>Right-Click/Mouse Wheel:</b> Zoom. <b>Shift:</b> More options.</span>
            <span class="fps">31 fps</span>
          </div>
        </section>
      </div>
      <div class="edge"></div>
      <task-bar></task-bar>
      <p class="mark">CSDN @lucust</p>`;
  }
}
